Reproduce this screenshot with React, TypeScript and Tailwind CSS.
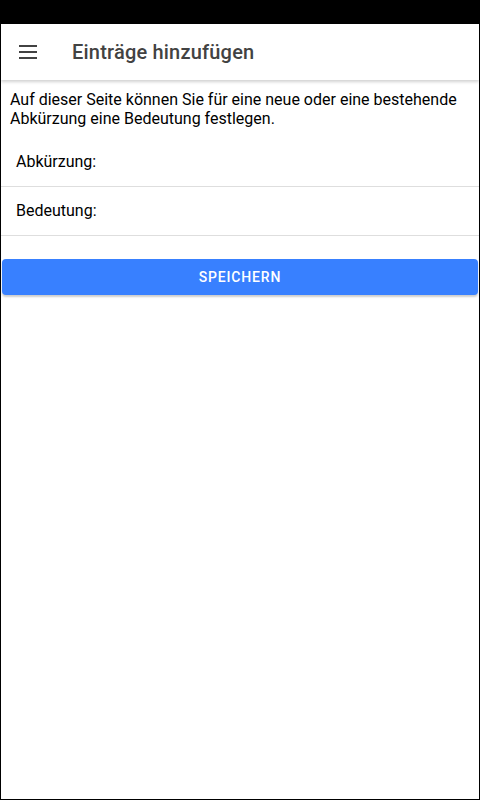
import React from "react";

const App = () => {
  return (
    <div className="h-[800px] w-[480px] bg-black flex flex-col font-['Roboto',sans-serif]">
      {/* status bar */}
      <div className="h-6 shrink-0" />
      <div className="flex-1 mx-px mb-px bg-white flex flex-col">
        {/* toolbar */}
        <div className="h-14 shrink-0 flex items-center shadow-[0_2px_3px_rgba(0,0,0,0.18)] relative z-10">
          <div className="w-[71px] pl-[18px]">
            <svg width="18" height="14" viewBox="0 0 18 14" className="block text-[#424242]">
              <rect x="0" y="0" width="18" height="2" fill="currentColor" />
              <rect x="0" y="6" width="18" height="2" fill="currentColor" />
              <rect x="0" y="12" width="18" height="2" fill="currentColor" />
            </svg>
          </div>
          <h1 className="text-[20px] font-medium text-[#424242] tracking-[0.01em]">Einträge hinzufügen</h1>
        </div>
        {/* content */}
        <p className="px-[9px] pt-[10px] text-[16px] leading-[19px] text-black">
          Auf dieser Seite können Sie für eine neue oder eine bestehende Abkürzung eine Bedeutung festlegen.
        </p>
        <div className="mt-[10px]">
          <div className="h-[49px] flex items-center pl-[15px] border-b border-[#dedede] text-[16px] text-black">
            Abkürzung:
          </div>
          <div className="h-[49px] flex items-center pl-[15px] border-b border-[#dedede] text-[16px] text-black">
            Bedeutung:
          </div>
        </div>
        <div className="px-px mt-[23px]">
          <button className="w-full h-9 rounded-[4px] bg-[#3880ff] text-white text-[14px] font-medium tracking-[0.06em] shadow-[0_2px_2px_rgba(0,0,0,0.2)]">
            SPEICHERN
          </button>
        </div>
      </div>
    </div>
  );
};

export default App;
